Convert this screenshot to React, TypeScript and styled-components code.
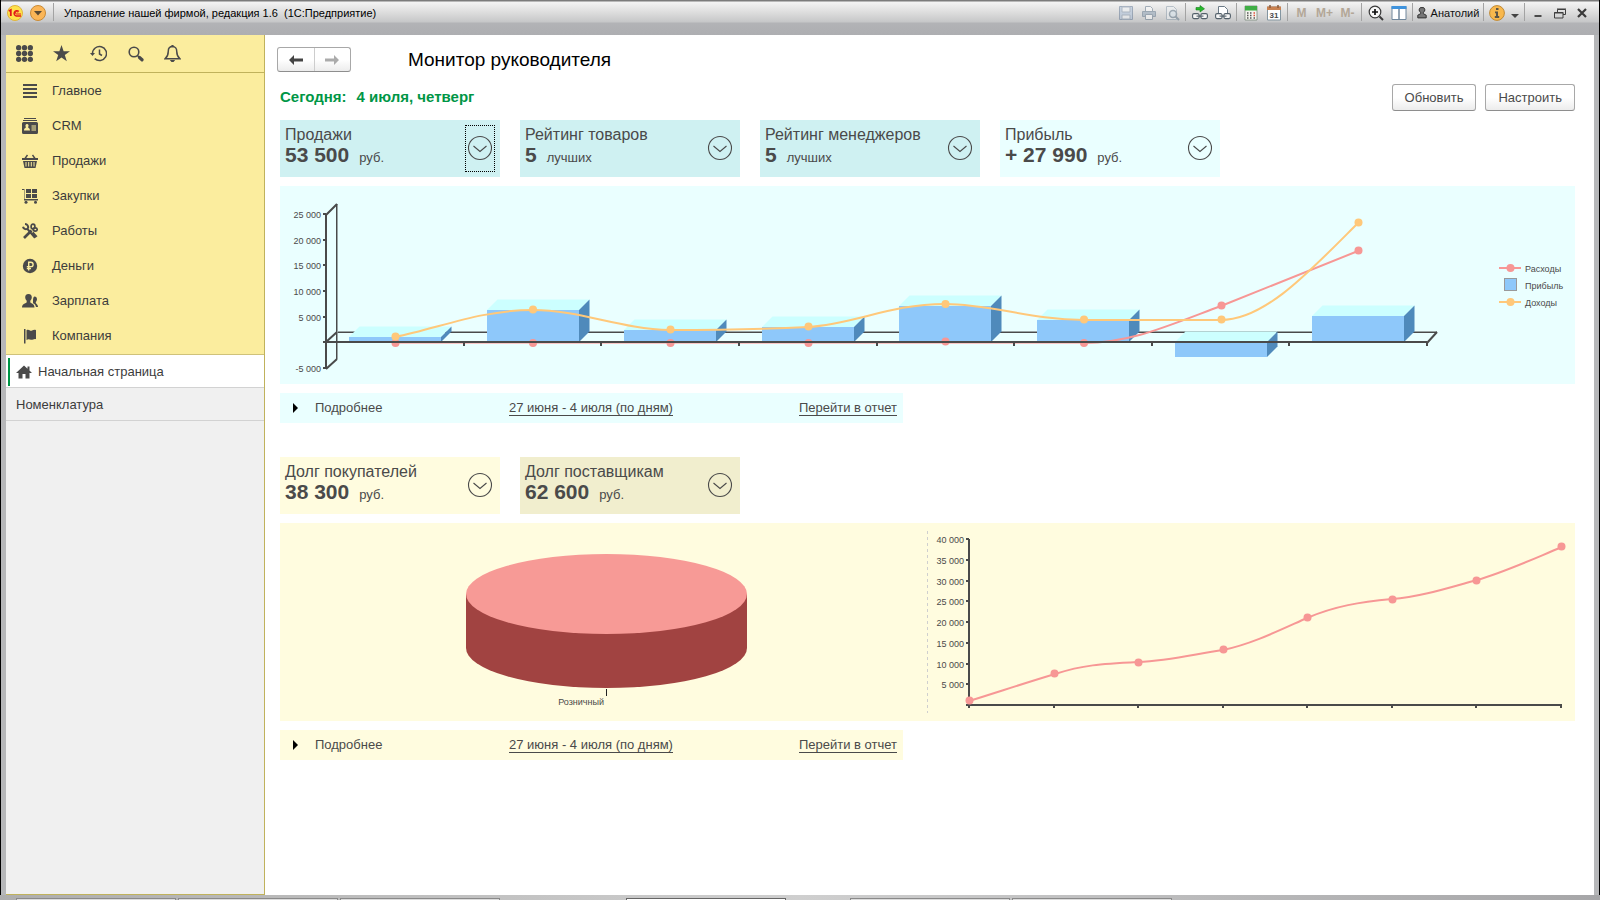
import React from "react";
import styled, { createGlobalStyle } from "styled-components";

const INK = "#4a4a4a";
const RED = "#f79795";
const ORANGE = "#ffc87a";
const BLUE = "#8ec8fa";

const GlobalStyle = createGlobalStyle`
  *, *::before, *::after { box-sizing: border-box; }
  body {
    margin: 0;
    background: #b0b1b4;
    color: ${INK};
    font: 13px/16px "Liberation Sans", Arial, sans-serif;
  }
  button {
    margin: 0;
    padding: 0;
    border: 0;
    background: none;
    color: inherit;
    font: inherit;
    cursor: pointer;
  }
  svg { display: block; flex: none; }
  h1, h2, p, ul { margin: 0; padding: 0; font-weight: normal; }
`;

const Window = styled.div`
  display: flex;
  flex-direction: column;
  min-height: 100vh;
`;

const TitleBar = styled.header`
  display: flex;
  align-items: center;
  height: 35px;
  padding: 0 6px 9px;
  border: 1px solid #000;
  border-width: 0 1px;
  background: linear-gradient(#7c7c7c 0 1px, #f4f4f4 2px, #dedede 12px, #c6c7c8 22px, #b2b3b6 23px, #adaeb1);
  color: #111;
`;

const AppMark = styled.div`
  display: flex;
  gap: 7px;
  padding-right: 5px;
`;

const WindowTitle = styled.h1`
  flex: 1;
  padding-left: 8px;
  color: #000;
  font-size: 11px;
  white-space: pre;
`;

const Separator = styled.span`
  width: 1px;
  height: 18px;
  margin: 3px 2px 0;
  align-self: flex-start;
  background: #a3a3a3;
`;

const BarButton = styled.button<{ $width?: number; $faded?: boolean }>`
  display: flex;
  align-items: center;
  justify-content: center;
  gap: 4px;
  width: ${(p) => p.$width ?? 23}px;
  height: 22px;
  opacity: ${(p) => (p.$faded ? 0.5 : 1)};
  font-size: 11px;
`;

const Memory = styled.span`
  color: #b3a797;
  font-size: 12px;
  font-weight: bold;
`;

const Frame = styled.div`
  display: flex;
  flex: 1;
  padding: 0 5px;
  border: 1px solid #000;
  border-width: 0 1px;
  background: #b6b7b9;
`;

const Sidebar = styled.aside`
  flex: none;
  display: flex;
  flex-direction: column;
  width: 259px;
  border: 1px solid #c0b25c;
  border-width: 0 1px 1px 0;
  background: #f0f0f0;
  color: #3c3c3c;
`;

const QuickTools = styled.div`
  display: flex;
  height: 38px;
  border-bottom: 1px solid #c0b25c;
  background: #fbed9e;
`;

const QuickButton = styled.button`
  display: flex;
  align-items: center;
  justify-content: center;
  width: 37px;
`;

const Sections = styled.nav`
  display: flex;
  flex-direction: column;
  padding-bottom: 1px;
  border-bottom: 1px solid #cfc27a;
  background: #fbed9e;
`;

const SectionLink = styled.a`
  display: flex;
  align-items: center;
  gap: 14px;
  height: 35px;
  padding-left: 16px;
  color: inherit;
  text-decoration: none;
`;

const OpenPage = styled.a<{ $active?: boolean }>`
  display: flex;
  align-items: center;
  gap: 6px;
  height: 33px;
  padding-top: 2px;
  padding-left: ${(p) => (p.$active ? 8 : 10)}px;
  border-bottom: 1px solid #d2d2d2;
  background: ${(p) => (p.$active ? "#fff" : "#f0f0f0")};
  color: inherit;
  text-decoration: none;
`;

const ActiveMark = styled.span`
  width: 2px;
  height: 28px;
  margin-left: -6px;
  background: #009646;
`;

const Main = styled.main`
  flex: 1;
  min-width: 0;
  padding: 12px 19px 24px 12px;
  background: #fff;
`;

const PageHead = styled.div`
  display: flex;
  align-items: center;
  gap: 57px;
`;

const History = styled.div`
  display: flex;
  width: 74px;
  height: 25px;
  border: 1px solid #a8a8a8;
  border-bottom-color: #8e8e8e;
  border-radius: 3px;
  background: linear-gradient(#fff 50%, #ececec);
`;

const HistoryButton = styled.button`
  display: flex;
  flex: 1;
  align-items: center;
  justify-content: center;
  & + & { border-left: 1px solid #cdcdcd; }
`;

const PageTitle = styled.h2`
  padding-top: 1px;
  color: #000;
  font-size: 19px;
  line-height: 24px;
`;

const Body = styled.div`
  display: flex;
  flex-direction: column;
  gap: 34px;
  padding-left: 3px;
`;

const DateRow = styled.div`
  display: flex;
  align-items: center;
  gap: 9px;
  height: 27px;
  margin: 12px 0 9px 3px;
`;

const Today = styled.p`
  display: flex;
  flex: 1;
  gap: 10px;
  padding-bottom: 2px;
  color: #009646;
  font-size: 15px;
  font-weight: bold;
`;

const ActionButton = styled.button`
  height: 27px;
  padding: 0 12px;
  border: 1px solid #a8a8a8;
  border-bottom-color: #8e8e8e;
  border-radius: 3px;
  background: linear-gradient(#fff 50%, #ececec);
`;

const Section = styled.section`
  display: flex;
  flex-direction: column;
  gap: 9px;
`;

const Tiles = styled.div`
  display: flex;
  flex-wrap: wrap;
  gap: 20px;
`;

const TileBox = styled.div<{ $fill: string }>`
  display: flex;
  justify-content: space-between;
  width: 220px;
  height: 57px;
  padding: 5px;
  background: ${(p) => p.$fill};
`;

const TileTitle = styled.h3`
  margin: 0;
  font-size: 16px;
  font-weight: normal;
  line-height: 19px;
`;

const TileValue = styled.p`
  line-height: 22px;
`;

const Amount = styled.strong`
  margin-right: 10px;
  font-size: 21px;
`;

const TileToggle = styled.button<{ $focused?: boolean }>`
  display: flex;
  align-items: center;
  justify-content: center;
  width: 30px;
  height: 47px;
  padding-bottom: 1px;
  border: 1px dotted ${(p) => (p.$focused ? "#000" : "transparent")};
`;

const Panel = styled.div<{ $fill: string }>`
  background: ${(p) => p.$fill};
`;

const Chart = styled.svg`
  width: 100%;
  height: auto;
  font-size: 9px;
  fill: ${INK};
`;

const Details = styled.div<{ $fill: string }>`
  display: flex;
  align-items: center;
  width: 623px;
  max-width: 100%;
  height: 30px;
  padding: 0 6px 0 12px;
  background: ${(p) => p.$fill};
`;

const Expand = styled.button`
  display: flex;
  align-items: center;
  gap: 17px;
  width: 217px;
`;

const TextLink = styled.a`
  border-bottom: 1px solid ${INK};
  color: inherit;
  line-height: 15px;
  text-decoration: none;
  &:last-child { margin-left: auto; }
`;

const TaskStrip = styled.footer`
  display: flex;
  gap: 2px;
  height: 5px;
  padding: 3px 16px 0;
  background: linear-gradient(90deg, #aeaeae, #cfcfcf 50%, #a6a6a8);
`;

const Task = styled.span<{ $gap?: number; $active?: boolean }>`
  width: 160px;
  margin-left: ${(p) => p.$gap ?? 0}px;
  border: 1px solid ${(p) => (p.$active ? "#666" : "#8a8a8a")};
  border-bottom: 0;
  background: ${(p) => (p.$active ? "#fff" : "#dcdcdc")};
`;

/* ---------- icons ---------- */

type IconProps = { children: React.ReactNode; size?: number };
const Icon = ({ children, size = 16 }: IconProps) => (
  <svg width={size} height={size} viewBox="0 0 16 16" fill="#4a4a4a" aria-hidden="true">
    {children}
  </svg>
);

const GridIcon = () => (
  <Icon size={17}>
    {[2.5, 8, 13.5].map((y) => [2.5, 8, 13.5].map((x) => <circle key={`${x}-${y}`} cx={x} cy={y} r="2.5" />))}
  </Icon>
);
const StarIcon = () => (
  <Icon size={17}>
    <path d="M8 0l2 5.8h6l-4.900 3.600 1.900 6-5-3.700-5 3.700 1.900-6L0 5.800h6z" />
  </Icon>
);
const HistoryIcon = () => (
  <svg width="17" height="17" viewBox="0 0 17 17" fill="none" stroke="#4a4a4a" strokeWidth="1.500" aria-hidden="true">
    <path d="M2.500 8.500a7 7 0 1 1 2.200 5.100" />
    <path d="M9.500 4.500v4.500l2.500 1.500" />
    <path d="M0 8h5L2.500 11z" fill="#4a4a4a" stroke="none" />
  </svg>
);
const SearchIcon = () => (
  <Icon>
    <circle cx="6" cy="6" r="4.800" fill="none" stroke="#4a4a4a" strokeWidth="1.600" />
    <path d="M9.500 9.500l1.500 1.500" stroke="#4a4a4a" strokeWidth="1.500" />
    <path d="M11.500 11.500l2.500 2.300" stroke="#4a4a4a" strokeWidth="3.200" strokeLinecap="round" />
  </Icon>
);
const BellIcon = () => (
  <Icon size={17}>
    <path
      d="M8 1.500c-2.700 0-4 2-4 4.500 0 3-.8 5-3 7h14c-2.200-2-3-4-3-7 0-2.500-1.300-4.500-4-4.500z"
      fill="none"
      stroke="#4a4a4a"
      strokeWidth="1.400"
    />
    <path d="M7 0h2v2H7zM5.500 14h5L9 16H7z" />
  </Icon>
);
const LinesIcon = () => (
  <Icon>
    <path d="M1 1h14v2H1zM1 5h14v2H1zM1 9h14v2H1zM1 13h14v2H1z" />
  </Icon>
);
const CardIcon = () => (
  <Icon>
    <path d="M2 0h12v1H2zM1 2h14v1H1zM1.500 4h13a1.500 1.500 0 0 1 1.500 1.500v9a1.500 1.500 0 0 1-1.500 1.500h-13A1.500 1.500 0 0 1 0 14.500v-9A1.500 1.500 0 0 1 1.500 4z" />
    <path d="M5 6a1.700 1.700 0 0 1 1 3c0 1 2 1 2 3.500H2C2 10 4 10 4 9a1.700 1.700 0 0 1 1-3zM9.500 7.500H14v1H9.500zM9.500 9.500H14v1H9.500zM9.500 11.500H14v1H9.500z" fill="#fbed9e" />
  </Icon>
);
const BasketIcon = () => (
  <Icon>
    <path d="M5.500 2L3 5.500M10.500 2L13 5.500" stroke="#4a4a4a" strokeWidth="1.400" />
    <path d="M0 5h16v2H0zM1 8h14l-1.500 7h-11z" />
    <path d="M4 9v4.500M6.700 9v4.500M9.300 9v4.500M12 9v4.500" stroke="#fbed9e" />
  </Icon>
);
const CartIcon = () => (
  <Icon>
    <path d="M0 1h2.500v10H16v1.500H2V2H0zM4 1h5v4H4zM10 1h5v4h-5zM4 6h5v4H4zM10 6h5v4h-5z" />
    <circle cx="4" cy="14.200" r="1.500" />
    <circle cx="13.500" cy="14.200" r="1.500" />
  </Icon>
);
const ToolsIcon = () => (
  <Icon>
    <path d="M1 3.800a3 3 0 0 0 4.300 2L13 14.800" fill="none" stroke="#4a4a4a" strokeWidth="2" />
    <path d="M3 1a3.300 3.300 0 0 1 3 4.500" fill="none" stroke="#4a4a4a" strokeWidth="2" />
    <path d="M2 15L9.500 7.500" stroke="#4a4a4a" strokeWidth="2.600" />
    <ellipse cx="11" cy="3.500" rx="1.900" ry="2.400" fill="none" stroke="#4a4a4a" strokeWidth="1.700" />
    <ellipse cx="13.200" cy="6.500" rx="2" ry="1.600" fill="none" stroke="#4a4a4a" strokeWidth="1.700" />
    <path d="M10.500 9.500l4 4.500" stroke="#4a4a4a" strokeWidth="2.600" />
  </Icon>
);
const RubleIcon = () => (
  <Icon>
    <circle cx="8" cy="8" r="7.200" />
    <path d="M6.700 12.500V4.200h2.200a2.200 2.200 0 0 1 0 4.400H4.800M4.800 10.500h4.200" fill="none" stroke="#fbed9e" strokeWidth="1.400" />
  </Icon>
);
const PeopleIcon = () => (
  <Icon>
    <path d="M6.500 1c2.400 0 3.300 1.500 3.300 3.200 0 1.500-.7 2.800-1.500 3.500v1.500c0 1 4.200 1 4.200 5.300H0c0-4.300 4.700-4.300 4.700-5.300V7.700C3.900 7 3.200 5.700 3.200 4.200 3.200 2.500 4.100 1 6.500 1z" />
    <path d="M12.500 3.500c1.700 0 2.500 1.200 2.500 2.700 0 1.300-.6 2-1.200 2.700v1c0 .8 2.200 1 2.200 4.100h-2c-.3-2-1.500-3-3-3.700V8.500C11 7.500 11 3.500 12.500 3.500z" />
  </Icon>
);
const FlagIcon = () => (
  <Icon>
    <path d="M2 1h1.500v14.500H2zM4.500 2.200C7 .5 8 3.500 10 2.500c1.500-.8 3-1 4-.3v9c-2-.8-3 .8-5 .6-1.500-.2-2.500-1-4.500.2z" />
  </Icon>
);
const HomeIcon = () => (
  <Icon>
    <path d="M8 1.500L0 9h2.500v5.500h4V10h3v4.500h4V9H16l-2.500-2.400V2.500h-2v2.200z" />
  </Icon>
);

const Arrow = ({ back }: { back?: boolean }) => (
  <svg width="14" height="12" viewBox="0 0 14 12" fill={back ? "#444" : "#ababab"} aria-hidden="true">
    <path d={back ? "M0 6l5-5v3.600h9v2.800H5V11z" : "M14 6L9 1v3.600H0v2.800h9V11z"} />
  </svg>
);

const Chevron = () => (
  <svg width="26" height="26" viewBox="0 0 26 26" fill="none" stroke={INK} strokeWidth="1.100" aria-hidden="true">
    <circle cx="13" cy="13" r="11.500" />
    <path d="M6.500 11l6.500 5.500 6.500-5.500" />
  </svg>
);

const Logo = () => (
  <svg width="16" height="16" viewBox="0 0 16 16" aria-hidden="true">
    <circle cx="8" cy="8" r="7.500" fill="#ffe24a" stroke="#e0b43a" />
    <path d="M1.800 6l2-1v6" fill="none" stroke="#e2161a" strokeWidth="1.800" />
    <path d="M11.800 6.500A2.700 2.700 0 1 0 9.300 11H14" fill="none" stroke="#e2161a" strokeWidth="1.500" />
    <path d="M10.800 7.500A1.200 1.200 0 1 0 9.600 9H14" fill="none" stroke="#e2161a" />
  </svg>
);
const MenuMark = () => (
  <svg width="16" height="16" viewBox="0 0 16 16" aria-hidden="true">
    <circle cx="8" cy="8" r="7.500" fill="#fbb657" stroke="#c98a35" />
    <path d="M4 6h8l-4 4.500z" fill="#5a4a33" />
  </svg>
);

const SaveIcon = () => (
  <Icon>
    <path d="M1.500 1.500h13v13h-13z" fill="#a9bfda" stroke="#5c7391" />
    <path d="M4 2h8v5H4zM4 10h8v4H4z" fill="#f2f5f8" stroke="#7c8ea6" />
  </Icon>
);
const PrintIcon = () => (
  <Icon>
    <path d="M4.500 6V1.500h5l2 2V6" fill="#fff" stroke="#5c7288" />
    <path d="M1.500 6.500h13v5h-13z" fill="#8a9fb4" stroke="#5c7288" />
    <path d="M4.500 9.500h7v5h-7z" fill="#fff" stroke="#5c7288" />
  </Icon>
);
const PreviewIcon = () => (
  <Icon>
    <path d="M2.500 1.500h7l3 3v10h-10z" fill="#eef2f5" stroke="#8698a8" />
    <circle cx="9" cy="9" r="3.500" fill="#d8e6f0" stroke="#5a7184" strokeWidth="1.500" />
    <path d="M11.500 11.500L15 15" stroke="#5a7184" strokeWidth="2" />
  </Icon>
);
const chain = (
  <g fill="#f5f5f5" stroke="#53606a" strokeWidth="1.100">
    <rect x="0.600" y="8.600" width="6.500" height="5" rx="1.500" />
    <rect x="8.900" y="8.600" width="6.500" height="5" rx="1.500" />
    <path d="M4.500 11.100h7" />
  </g>
);
const LinkIcon = () => (
  <Icon>
    {chain}
    <path d="M4 2.500h4V.5l4.500 3.300L8 7V5H4z" fill="#27b82c" stroke="#15801b" strokeWidth="0.600" />
  </Icon>
);
const LinkPageIcon = () => (
  <Icon>
    <path d="M3.500 10V1.500h6l3 3V10" fill="#fff" stroke="#6b7a86" />
    {chain}
  </Icon>
);
const CalculatorIcon = () => (
  <Icon>
    <path d="M2 1h12v14H2z" fill="#f4f4ee" stroke="#7c8a7c" strokeWidth="0.800" />
    <path d="M2 1h12v4.500H2z" fill="#3fae45" />
    <path d="M4 8h1.500M7 8h1.500M4 10.500h1.500M7 10.500h1.500M4 13h1.500M7 13h1.500M10.500 13H12" stroke="#555" strokeWidth="1.500" />
    <path d="M10.500 8H12M10.500 10.500H12" stroke="#e0503c" strokeWidth="1.500" />
  </Icon>
);
const CalendarIcon = () => (
  <Icon>
    <path d="M1.500 2h13v13h-13z" fill="#fff" stroke="#8395a0" />
    <path d="M1 1.500h14V5H1z" fill="#c98150" />
    <path d="M4 0v3M12 0v3" stroke="#8a5a38" strokeWidth="1.500" />
    <text x="8" y="13" fontSize="8" fontWeight="bold" textAnchor="middle">31</text>
  </Icon>
);
const ZoomIcon = () => (
  <Icon>
    <circle cx="7" cy="7" r="5.800" fill="#f8f8f8" stroke="#3a3a3a" strokeWidth="1.200" />
    <path d="M4 7h6M7 4v6" stroke="#111" strokeWidth="1.700" />
    <path d="M11.500 11.500l3.500 3.500" stroke="#3a3a3a" strokeWidth="2" />
  </Icon>
);
const PanelsIcon = () => (
  <Icon>
    <path d="M1 1.500h14v13H1z" fill="#fff" stroke="#70879c" />
    <path d="M.5 1h15v3H.5z" fill="#3f93dd" />
    <path d="M8 4v10.500" stroke="#70879c" strokeWidth="1.500" />
  </Icon>
);
const UserIcon = () => (
  <svg width="10" height="12" viewBox="0 0 10 12" fill="#777" stroke="#333" aria-hidden="true">
    <path d="M5 .6a2.200 2.400 0 0 1 1.300 4.600v1.500l2.900 1.500v2.700H.8V8.200l2.900-1.500V5.200A2.200 2.400 0 0 1 5 .6z" />
  </svg>
);
const InfoIcon = () => (
  <Icon>
    <circle cx="8" cy="8" r="7.400" fill="#f8b84d" stroke="#c08a35" />
    <path d="M7 3h2.500v2H7zM6 6.500h3v4.500h1.200V13H5.800v-2H7V8.300H6z" fill="#5c5547" />
  </Icon>
);
const CaretIcon = () => (
  <svg width="8" height="14" viewBox="0 0 8 14" fill="#444" aria-hidden="true">
    <path d="M0 8h8l-4 4z" />
  </svg>
);
const MinimizeIcon = () => (
  <Icon>
    <path d="M4.500 10h7v2h-7z" />
  </Icon>
);
const RestoreIcon = () => (
  <svg width="12" height="11" viewBox="0 0 12 11" fill="none" stroke="#3f3f3f" aria-hidden="true">
    <path d="M3.500 4V1.500h8v5H9M3 1h9" />
    <path d="M.5 4.500H9v5.500H.5zM0 5h9.500" />
  </svg>
);
const CloseIcon = () => (
  <svg width="10" height="10" viewBox="0 0 10 10" stroke="#3a3a3a" strokeWidth="2.200" aria-hidden="true">
    <path d="M1 1l8 8M9 1L1 9" />
  </svg>
);

/* ---------- charts ---------- */

type Point = [number, number];

const Dots = ({ points, color }: { points: Point[]; color: string }) => (
  <g fill={color}>
    {points.map(([x, y]) => (
      <circle key={x} cx={x} cy={y} r="4" />
    ))}
  </g>
);

const ZERO = 156;
const DEPTH = 10.5;
const BAR_WIDTH = 92;
const bars: Point[] = [
  [69, 151], [207, 124], [344, 144], [482, 141], [619, 120], [757, 134], [895, 171], [1032, 130],
];

const Bar = ({ x, end }: { x: number; end: number }) => {
  const right = x + BAR_WIDTH;
  const top = Math.min(end, ZERO);
  const bottom = Math.max(end, ZERO);
  return (
    <g>
      <path d={`M${x} ${top}l${DEPTH}-${DEPTH}H${right + DEPTH}L${right} ${top}z`} fill="#ccffff" />
      <path d={`M${right} ${top}l${DEPTH}-${DEPTH}V${bottom - DEPTH}L${right} ${bottom}z`} fill="#4f8abb" />
      <path d={`M${x} ${top}H${right}V${bottom}H${x}z`} fill={BLUE} />
    </g>
  );
};

const income: Point[] = [
  [115.500, 150.500], [253, 123.500], [390.500, 143.500], [528.500, 140.500], [665.500, 118], [804, 133.500], [941.500, 133.500], [1078.500, 36.500],
];
const expenses: Point[] = [
  [115.500, 157], [253, 157], [390.500, 157], [528.500, 157], [665.500, 155.500], [804, 157], [941.500, 119.500], [1078.500, 64.500],
];

const ProfitChart = () => (
  <Chart viewBox="0 0 1295 198" role="img" aria-label="Прибыль по дням">
    <path d="M57 145.500H1157" stroke="#9aa5a5" />
    <path d="M57 146.500H1157" stroke={INK} />
    <path d="M57.500 18V173" stroke="#9aa5a5" />
    <path d="M56.500 18V173" stroke={INK} />
    <path d="M46 29L57 18M46 156l11-10M46 183l11-10M1147 157l10-11" stroke={INK} strokeWidth="2" fill="none" />
    {bars.map(([x, end]) => (
      <Bar key={x} x={x} end={end} />
    ))}
    <g fill="none" strokeWidth="2">
      <path d="M115 157.500H804" stroke="#f9c6c5" strokeWidth="1" />
      <path d="M804 157C850 157 885 141 941 120L1078 65" stroke={RED} />
      <path
        d="M115 151C160 142 200 124 253 124C300 124 340 143 390 144C440 144 490 143 528 141C575 138 610 118 665 118C712 118 750 134 804 134H941C985 134 1030 85 1078 37"
        stroke={ORANGE}
      />
    </g>
    <Dots points={expenses} color={RED} />
    <path d="M43 156H1147M46 28V183" stroke={INK} strokeWidth="2" />
    <path d="M184 157v3M321 157v3M459 157v3M597 157v3M734 157v3M872 157v3M1009 157v3M1147 157v3" stroke={INK} strokeWidth="2" />
    <Dots points={income} color={ORANGE} />
    {([["25 000", 28], ["20 000", 54], ["15 000", 79], ["10 000", 105], ["5 000", 131], ["-5 000", 182]] as [string, number][]).map(
      ([label, y]) => (
        <g key={label}>
          <path d={`M43 ${y}h3`} stroke={INK} strokeWidth="2" />
          <text x="41" y={y + 4} textAnchor="end">{label}</text>
        </g>
      )
    )}
    <path d="M1219 82h22" stroke={RED} strokeWidth="2" />
    <circle cx="1230.500" cy="82" r="4" fill={RED} />
    <rect x="1224.500" y="92.500" width="12" height="12" fill={BLUE} stroke="#9a9a9a" />
    <path d="M1219 116h22" stroke={ORANGE} strokeWidth="2" />
    <circle cx="1230.500" cy="116" r="4" fill={ORANGE} />
    <text x="1245" y="86">Расходы</text>
    <text x="1245" y="103">Прибыль</text>
    <text x="1245" y="120">Доходы</text>
  </Chart>
);

const debt: Point[] = [
  [689.500, 177.500], [774.500, 150.500], [858.500, 139.500], [943.500, 126.500], [1027.500, 94.500], [1112.500, 76.500], [1196.500, 57.500], [1281.500, 23.500],
];

const DebtChart = () => (
  <Chart viewBox="0 0 1295 198" role="img" aria-label="Долг покупателей">
    <path d="M186 71V125A140.500 40 0 0 0 467 125V71z" fill="#a14341" />
    <ellipse cx="326.500" cy="71" rx="140.500" ry="40" fill="#f79a96" />
    <path d="M326.500 166v7" stroke="#222" />
    <text x="324" y="182" textAnchor="end">Розничный</text>
    <path d="M647.500 8V190" stroke="#cfcfcf" strokeDasharray="3 3" />
    <path d="M686 182H1281M689 16V183" stroke={INK} strokeWidth="2" />
    <path d="M689 182v3M774 182v3M858 182v3M943 182v3M1027 182v3M1112 182v3M1196 182v3M1281 181v4" stroke={INK} strokeWidth="2" />
    {[16, 37, 58, 78, 99, 120, 141, 161].map((y, i) => (
      <g key={y}>
        <path d={`M686 ${y}h3`} stroke={INK} strokeWidth="2" />
        <text x="684" y={y + 4} textAnchor="end">{`${40 - i * 5} 000`}</text>
      </g>
    ))}
    <path
      d="M689 178C718 169 745 160 775 151C803 142 820 141 858 139C890 138 915 131 943 127C972 121 1000 107 1027 95C1055 83 1080 79 1112 76C1140 74 1168 65 1197 57C1225 49 1253 36 1282 24"
      fill="none"
      stroke={RED}
      strokeWidth="2"
    />
    <Dots points={debt} color={RED} />
  </Chart>
);

/* ---------- page parts ---------- */

type TileProps = { title: string; amount: string; unit: string; fill: string; focused?: boolean };
const Tile = ({ title, amount, unit, fill, focused }: TileProps) => (
  <TileBox $fill={fill}>
    <div>
      <TileTitle>{title}</TileTitle>
      <TileValue>
        <Amount>{amount}</Amount>
        {unit}
      </TileValue>
    </div>
    <TileToggle $focused={focused} aria-label={title}>
      <Chevron />
    </TileToggle>
  </TileBox>
);

const DetailsRow = ({ fill }: { fill: string }) => (
  <Details $fill={fill}>
    <Expand>
      <svg width="6" height="10" viewBox="0 0 6 10" fill="#000" aria-hidden="true">
        <path d="M1 0l5 5-5 5z" />
      </svg>
      Подробнее
    </Expand>
    <TextLink href="#period">27 июня - 4 июля (по дням)</TextLink>
    <TextLink href="#report">Перейти в отчет</TextLink>
  </Details>
);

const sections: [string, React.FC][] = [
  ["Главное", LinesIcon],
  ["CRM", CardIcon],
  ["Продажи", BasketIcon],
  ["Закупки", CartIcon],
  ["Работы", ToolsIcon],
  ["Деньги", RubleIcon],
  ["Зарплата", PeopleIcon],
  ["Компания", FlagIcon],
];

const quickTools: [string, React.FC][] = [
  ["Меню", GridIcon],
  ["Избранное", StarIcon],
  ["История", HistoryIcon],
  ["Поиск", SearchIcon],
  ["Оповещения", BellIcon],
];

const CYAN = "#eaffff";
const CYAN_DARK = "#cff1f2";
const CREAM = "#fffcdf";
const CREAM_DARK = "#f1eece";

export default function App() {
  return (
    <Window>
      <GlobalStyle />
      <TitleBar>
        <AppMark>
          <Logo />
          <MenuMark />
        </AppMark>
        <Separator />
        <WindowTitle>Управление нашей фирмой, редакция 1.6  (1С:Предприятие)</WindowTitle>
        <BarButton $faded aria-label="Сохранить"><SaveIcon /></BarButton>
        <BarButton $faded aria-label="Печать"><PrintIcon /></BarButton>
        <BarButton $faded aria-label="Просмотр"><PreviewIcon /></BarButton>
        <Separator />
        <BarButton aria-label="Получить ссылку"><LinkIcon /></BarButton>
        <BarButton aria-label="Перейти по ссылке"><LinkPageIcon /></BarButton>
        <Separator />
        <BarButton aria-label="Калькулятор"><CalculatorIcon /></BarButton>
        <BarButton aria-label="Календарь"><CalendarIcon /></BarButton>
        <Separator />
        <BarButton><Memory>M</Memory></BarButton>
        <BarButton><Memory>M+</Memory></BarButton>
        <BarButton><Memory>M-</Memory></BarButton>
        <Separator />
        <BarButton aria-label="Масштаб"><ZoomIcon /></BarButton>
        <BarButton aria-label="Панели"><PanelsIcon /></BarButton>
        <Separator />
        <BarButton $width={66}><UserIcon />Анатолий</BarButton>
        <Separator />
        <BarButton $width={22} aria-label="Справка"><InfoIcon /></BarButton>
        <BarButton $width={14} aria-label="Ещё"><CaretIcon /></BarButton>
        <Separator />
        <BarButton $width={22} aria-label="Свернуть"><MinimizeIcon /></BarButton>
        <BarButton $width={22} aria-label="Восстановить"><RestoreIcon /></BarButton>
        <BarButton $width={22} aria-label="Закрыть"><CloseIcon /></BarButton>
      </TitleBar>

      <Frame>
        <Sidebar>
          <QuickTools>
            {quickTools.map(([label, Glyph]) => (
              <QuickButton key={label} aria-label={label}><Glyph /></QuickButton>
            ))}
          </QuickTools>
          <Sections>
            {sections.map(([label, Glyph]) => (
              <SectionLink key={label} href="#section"><Glyph />{label}</SectionLink>
            ))}
          </Sections>
          <OpenPage $active href="#home"><ActiveMark /><HomeIcon />Начальная страница</OpenPage>
          <OpenPage href="#items">Номенклатура</OpenPage>
        </Sidebar>

        <Main>
          <PageHead>
            <History>
              <HistoryButton aria-label="Назад"><Arrow back /></HistoryButton>
              <HistoryButton aria-label="Вперед"><Arrow /></HistoryButton>
            </History>
            <PageTitle>Монитор руководителя</PageTitle>
          </PageHead>
          <DateRow>
            <Today>
              <span>Сегодня:</span>
              <span>4 июля, четверг</span>
            </Today>
            <ActionButton>Обновить</ActionButton>
            <ActionButton>Настроить</ActionButton>
          </DateRow>
          <Body>
            <Section>
              <Tiles>
                <Tile title="Продажи" amount="53 500" unit="руб." fill={CYAN_DARK} focused />
                <Tile title="Рейтинг товаров" amount="5" unit="лучших" fill={CYAN_DARK} />
                <Tile title="Рейтинг менеджеров" amount="5" unit="лучших" fill={CYAN_DARK} />
                <Tile title="Прибыль" amount="+ 27 990" unit="руб." fill={CYAN} />
              </Tiles>
              <Panel $fill={CYAN}><ProfitChart /></Panel>
              <DetailsRow fill={CYAN} />
            </Section>
            <Section>
              <Tiles>
                <Tile title="Долг покупателей" amount="38 300" unit="руб." fill={CREAM} />
                <Tile title="Долг поставщикам" amount="62 600" unit="руб." fill={CREAM_DARK} />
              </Tiles>
              <Panel $fill={CREAM}><DebtChart /></Panel>
              <DetailsRow fill={CREAM} />
            </Section>
          </Body>
        </Main>
      </Frame>

      <TaskStrip>
        <Task />
        <Task />
        <Task />
        <Task $gap={124} $active />
        <Task $gap={62} />
        <Task />
      </TaskStrip>
    </Window>
  );
}
